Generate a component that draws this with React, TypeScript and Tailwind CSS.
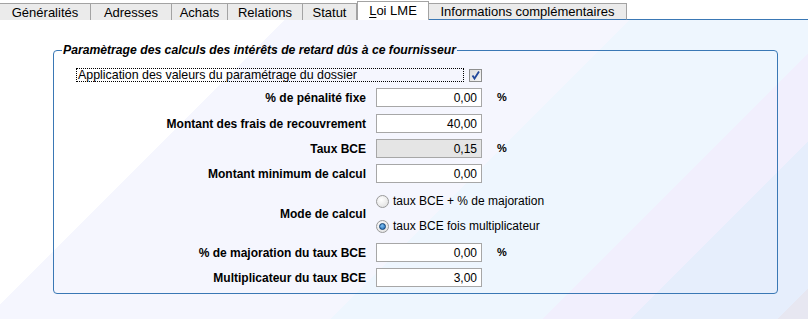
import React from "react";

const tabs = [
  { label: "Généralités", w: "w-[91px]" },
  { label: "Adresses", w: "w-[81px]" },
  { label: "Achats", w: "w-[56px]" },
  { label: "Relations", w: "w-[75px]" },
  { label: "Statut", w: "w-[54px]" },
];

function Field({ value, disabled }: { value: string; disabled?: boolean }) {
  return (
    <div
      className={`ml-[10px] flex h-[19px] w-[106px] items-center justify-end border border-[#a7a7a7] pr-[4px] text-[12px] leading-none ${
        disabled ? "bg-[#e5e5e5]" : "bg-white"
      }`}
    >
      {value}
    </div>
  );
}

function Row({ label, value, pct, disabled, className }: { label: string; value: string; pct?: boolean; disabled?: boolean; className: string }) {
  return (
    <div className={`flex h-[19px] items-center ${className}`}>
      <div className="w-[306px] text-right text-[12px] font-bold">{label}</div>
      <Field value={value} disabled={disabled} />
      {pct ? <span className="ml-[15px] text-[11px] font-bold">%</span> : null}
    </div>
  );
}

function Radio({ checked, label }: { checked?: boolean; label: string }) {
  return (
    <div className="flex h-[18px] items-center">
      <span className="flex h-[13px] w-[13px] items-center justify-center rounded-full border border-[#9a9a9a] bg-[radial-gradient(circle_at_40%_35%,#ffffff,#dcdcdc)]">
        {checked ? (
          <span className="h-[7px] w-[7px] rounded-full border border-[#0d3f73] bg-[radial-gradient(circle_at_40%_35%,#7fc0f2,#1b65b0)]" />
        ) : null}
      </span>
      <span className="ml-[4px] text-[12px]">{label}</span>
    </div>
  );
}

export default function App() {
  return (
    <div className="h-[319px] w-[808px] overflow-hidden bg-white font-['Liberation_Sans',Arial,sans-serif] text-black">
      <div className="flex h-[20px] items-end text-[13px]">
        {tabs.map((t) => (
          <div
            key={t.label}
            className={`${t.w} flex h-[17px] items-center justify-center border-t border-r border-[#a3a3a3] bg-[#ebebeb] leading-none`}
          >
            {t.label}
          </div>
        ))}
        <div className="flex h-[19px] w-[72px] items-center justify-center border-x border-t border-[#a3a3a3] bg-white pb-[1px] leading-none">
          <span>
            <span className="underline underline-offset-2">L</span>oi LME
          </span>
        </div>
        <div className="flex h-[17px] w-[198px] items-center justify-center border-r border-t border-[#a3a3a3] border-b border-b-[#3a78b5] bg-[#ebebeb] leading-none">
          Informations complémentaires
        </div>
        <div className="h-full flex-1 border-b border-[#3a78b5]" />
      </div>

      <div className="h-[299px] bg-[linear-gradient(135deg,#ffffff_0px,#ffffff_201px,#f5f6fe_201px,#f5f6fe_445px,#eef6fe_445px,#eef6fe_595px,#f1effd_595px,#f1effd_657px,#e6eefc_657px,#e6eefc_761px,#e7e7f1_761px)] pl-[53px] pt-[23px]">
        <fieldset className="h-[251px] w-[725px] rounded-[4px] border border-[#3a78b5] px-[6px]">
          <legend className="ml-[2px] px-[1px] text-[12.2px] leading-[14px] font-bold italic">
            Paramètrage des calculs des intérêts de retard dûs à ce fournisseur
          </legend>
          <div className="flex flex-col">
            <div className="mt-[11px] ml-[16px] flex items-center">
              <div className="flex h-[14px] w-[388px] items-center border border-dotted border-black pl-[1px] text-[12.4px] leading-none">
                Application des valeurs du paramétrage du dossier
              </div>
              <span className="ml-[5px] flex h-[13px] w-[13px] items-center justify-center border border-[#8e8f8f] bg-[linear-gradient(135deg,#dcdcdc,#f6f6f6)]">
                <svg viewBox="0 0 11 11" className="h-[11px] w-[11px]">
                  <path d="M2.5 5.5 L4.5 8.5 L9 1.5" fill="none" stroke="#21479a" strokeWidth="1.8" />
                </svg>
              </span>
            </div>
            <Row className="mt-[6px]" label="% de pénalité fixe" value="0,00" pct />
            <Row className="mt-[7px]" label="Montant des frais de recouvrement" value="40,00" />
            <Row className="mt-[6px]" label="Taux BCE" value="0,15" pct disabled />
            <Row className="mt-[6px]" label="Montant minimum de calcul" value="0,00" />
            <div className="mt-[9px] flex items-center">
              <div className="w-[306px] text-right text-[12px] font-bold">Mode de calcul</div>
              <div className="ml-[10px] flex flex-col gap-[7px]">
                <Radio label="taux BCE + % de majoration" />
                <Radio checked label="taux BCE fois multiplicateur" />
              </div>
            </div>
            <Row className="mt-[8px]" label="% de majoration du taux BCE" value="0,00" pct />
            <Row className="mt-[6px]" label="Multiplicateur du taux BCE" value="3,00" />
          </div>
        </fieldset>
      </div>
    </div>
  );
}
